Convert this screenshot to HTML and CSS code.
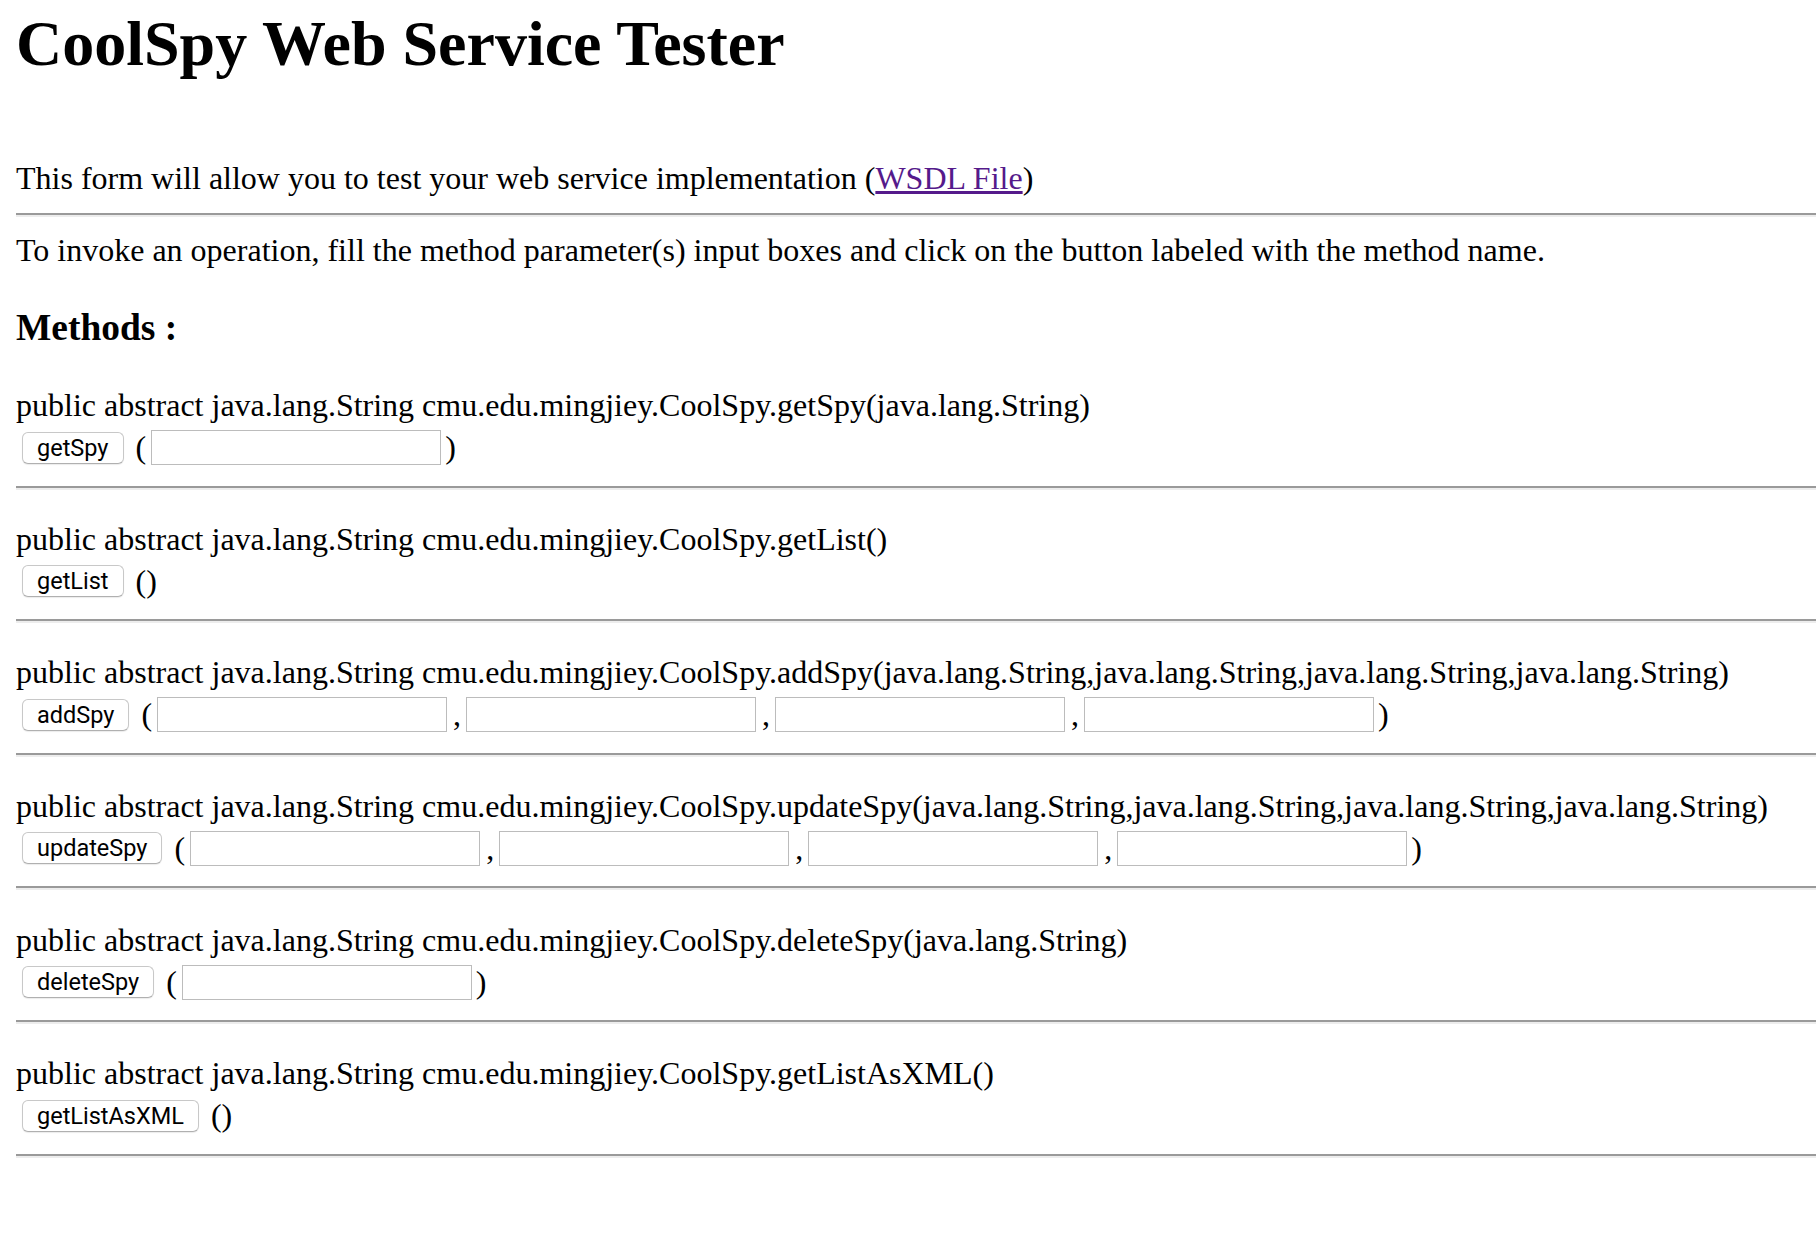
FILE: index.html
```html
<!DOCTYPE html>
<html>
<head>
<meta charset="utf-8">
<title>CoolSpy Web Service Tester</title>
<link rel="stylesheet" href="styles.css">
</head>
<body>
<div class="page">
  <h1 class="title">CoolSpy Web Service Tester</h1>
  <p class="intro">This form will allow you to test your web service implementation (<a class="wsdl" href="#">WSDL File</a>)</p>
  <hr class="rule rule-top">
  <p class="instr">To invoke an operation, fill the method parameter(s) input boxes and click on the button labeled with the method name.</p>
  <h3 class="methods-title">Methods :</h3>

  <div class="method">
    <div class="sig">public abstract java.lang.String cmu.edu.mingjiey.CoolSpy.getSpy(java.lang.String)</div>
    <div class="controls">
      <button class="btn" type="button">getSpy</button>
      <span class="paren">(</span>
      <input class="field" type="text">
      <span class="close">)</span>
    </div>
  </div>
  <hr class="rule">

  <div class="method">
    <div class="sig">public abstract java.lang.String cmu.edu.mingjiey.CoolSpy.getList()</div>
    <div class="controls">
      <button class="btn" type="button">getList</button>
      <span class="paren">()</span>
    </div>
  </div>
  <hr class="rule">

  <div class="method">
    <div class="sig">public abstract java.lang.String cmu.edu.mingjiey.CoolSpy.addSpy(java.lang.String,java.lang.String,java.lang.String,java.lang.String)</div>
    <div class="controls">
      <button class="btn" type="button">addSpy</button>
      <span class="paren">(</span>
      <input class="field" type="text"><span class="comma">,</span>
      <input class="field" type="text"><span class="comma">,</span>
      <input class="field" type="text"><span class="comma">,</span>
      <input class="field" type="text">
      <span class="close">)</span>
    </div>
  </div>
  <hr class="rule">

  <div class="method">
    <div class="sig">public abstract java.lang.String cmu.edu.mingjiey.CoolSpy.updateSpy(java.lang.String,java.lang.String,java.lang.String,java.lang.String)</div>
    <div class="controls">
      <button class="btn" type="button">updateSpy</button>
      <span class="paren">(</span>
      <input class="field" type="text"><span class="comma">,</span>
      <input class="field" type="text"><span class="comma">,</span>
      <input class="field" type="text"><span class="comma">,</span>
      <input class="field" type="text">
      <span class="close">)</span>
    </div>
  </div>
  <hr class="rule">

  <div class="method">
    <div class="sig">public abstract java.lang.String cmu.edu.mingjiey.CoolSpy.deleteSpy(java.lang.String)</div>
    <div class="controls">
      <button class="btn" type="button">deleteSpy</button>
      <span class="paren">(</span>
      <input class="field" type="text">
      <span class="close">)</span>
    </div>
  </div>
  <hr class="rule">

  <div class="method">
    <div class="sig">public abstract java.lang.String cmu.edu.mingjiey.CoolSpy.getListAsXML()</div>
    <div class="controls">
      <button class="btn" type="button">getListAsXML</button>
      <span class="paren">()</span>
    </div>
  </div>
  <hr class="rule">
</div>
</body>
</html>
```
FILE: styles.css
```css
html, body {
  margin: 0;
  padding: 0;
  background: #ffffff;
}

body {
  font-family: "Liberation Serif", "Times New Roman", serif;
  font-size: 32px;
  color: #000000;
}

.page {
  padding: 8.4px 0 40px 16px;
}

.title {
  margin: 0;
  font-size: 64px;
  line-height: 72px;
  font-weight: bold;
  white-space: nowrap;
}

.intro {
  margin: 79.8px 0 0 0;
  line-height: 36px;
  white-space: nowrap;
}

.wsdl {
  color: #551a8b;
  text-decoration: underline;
}

.rule {
  display: block;
  height: 0;
  margin: 20.5px 0 31.1px 0;
  border: none;
  border-top: 2px solid #9a9a9a;
  border-bottom: 2px solid #ededed;
}

.rule-top {
  margin: 16.8px 0 15.2px 0;
}

.instr {
  margin: 0;
  line-height: 36px;
  white-space: nowrap;
}

.methods-title {
  margin: 37.7px 0 38.3px 0;
  font-size: 37.44px;
  line-height: 43px;
  font-weight: bold;
}

.method {
  display: flex;
  flex-direction: column;
}

.sig {
  line-height: 36px;
  white-space: nowrap;
}

.controls {
  display: flex;
  align-items: center;
  height: 35px;
  margin-top: 7px;
  line-height: 35px;
}

.btn {
  margin: 0 0 0 6px;
  height: 32px;
  padding: 0 14px;
  font-family: Roboto, "Liberation Sans", Arial, sans-serif;
  font-size: 23.5px;
  line-height: 30px;
  color: #000000;
  background: #ffffff;
  border: 1px solid #c8c8c8;
  border-bottom-color: #b0b0b0;
  border-radius: 6px;
  box-shadow: 0 1px 1px rgba(0, 0, 0, 0.08);
}

.paren {
  margin-left: 12px;
}

.field {
  box-sizing: border-box;
  width: 290px;
  height: 35px;
  margin: 0 0 0 5px;
  padding: 0 4px;
  border: 1px solid #bcbcbc;
  background: #ffffff;
  font-size: 24px;
}

.comma {
  margin-left: 6px;
}

.close {
  margin-left: 4px;
}
```
